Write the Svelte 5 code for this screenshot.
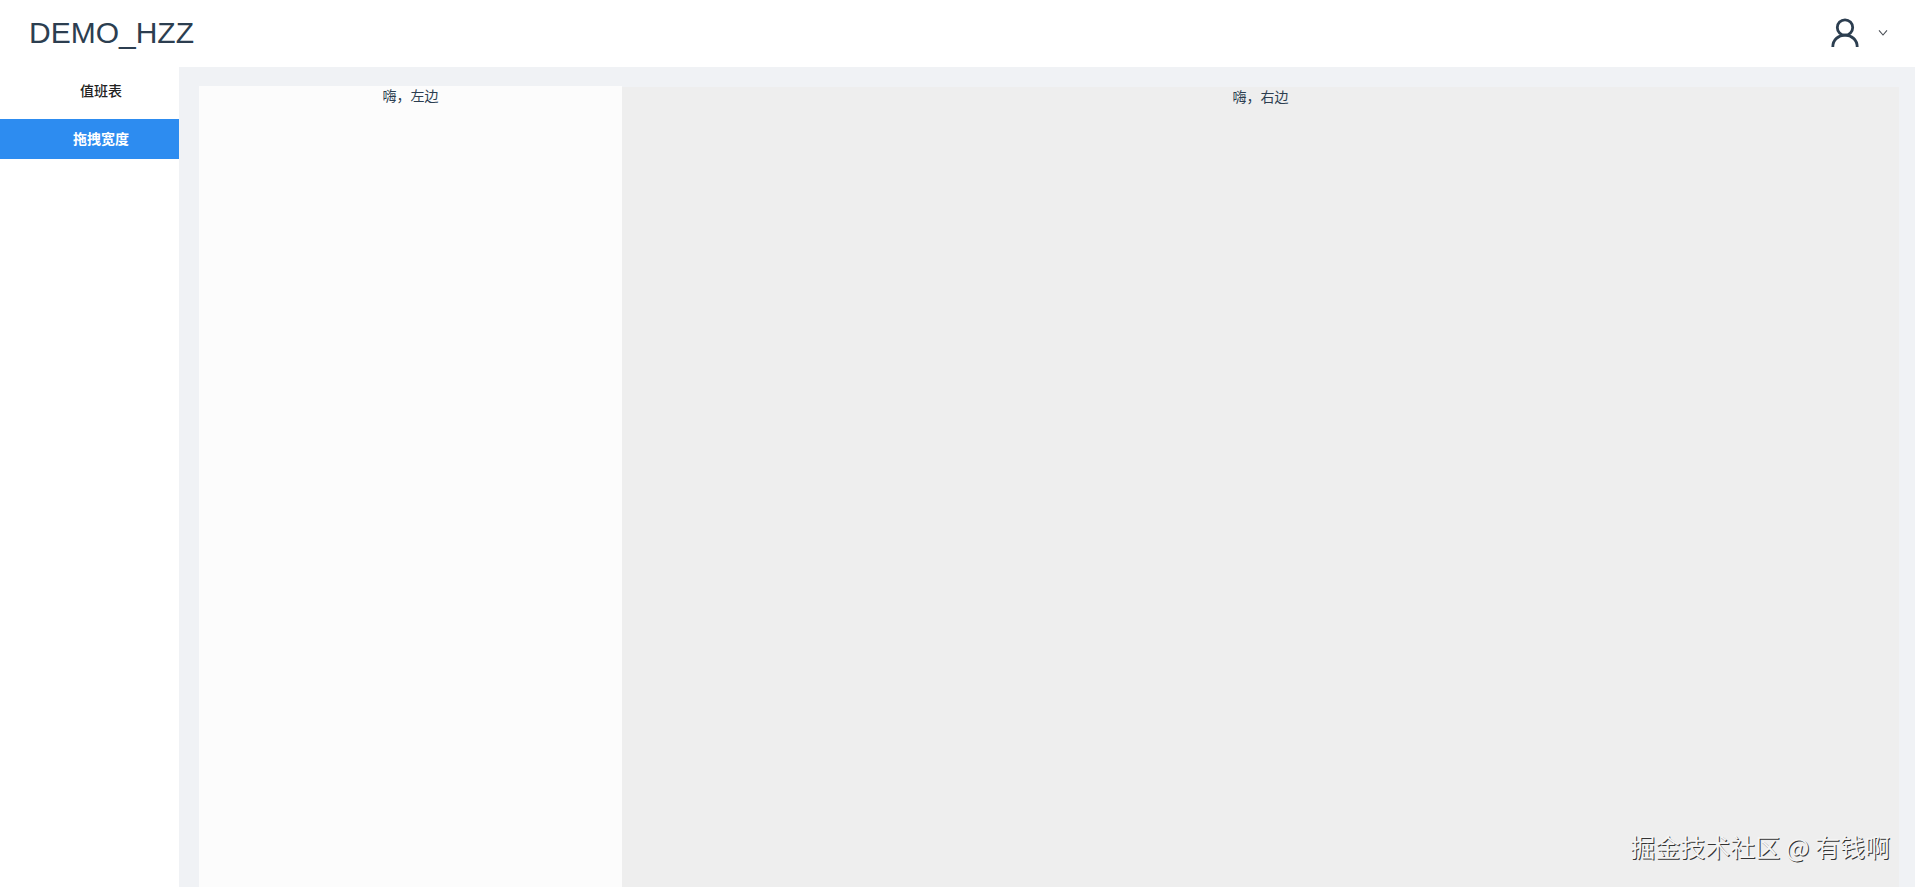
<script>
  const items = ['值班表', '拖拽宽度'];
  let active = $state('拖拽宽度');
</script>

<div class="page">
  <header>
    <h1>DEMO_HZZ</h1>
    <button class="account" aria-label="账户">
      <svg width="28" height="30" viewBox="0 0 28 30" fill="none" stroke="#2c3e50" stroke-width="2.8">
        <circle cx="14" cy="9.5" r="7.7" />
        <path d="M1.8 29C1.8 21.8 7.4 17.2 14 17.2S26.2 21.8 26.2 29" />
      </svg>
      <svg width="10" height="8" viewBox="0 0 10 8" fill="none" stroke="#4a4f56" stroke-width="1.1">
        <path d="M1 1.3L5 6L9 1.3" />
      </svg>
    </button>
  </header>
  <div class="body">
    <nav>
      {#each items as item}
        <button class:active={active === item} onclick={() => (active = item)}>{item}</button>
      {/each}
    </nav>
    <main>
      <section class="left">嗨，左边</section>
      <section class="right">嗨，右边</section>
    </main>
  </div>
  <div class="mark">掘金技术社区 @ 有钱啊</div>
</div>

<style>
  :global(body) {
    margin: 0;
  }
  .page {
    position: relative;
    display: flex;
    flex-direction: column;
    min-height: 100vh;
    background: #fff;
    color: #2c3e50;
    font: 14px/20px "Liberation Sans", "Noto Sans CJK SC", sans-serif;
  }
  header {
    box-sizing: border-box;
    display: flex;
    align-items: center;
    justify-content: space-between;
    height: 67px;
    padding: 0 27px 2px 29px;
  }
  h1 {
    margin: 0;
    font-size: 30px;
    line-height: 40px;
    font-weight: 400;
  }
  button {
    border: 0;
    background: none;
    font: inherit;
    cursor: pointer;
  }
  .account {
    display: flex;
    align-items: center;
    gap: 19px;
    padding: 0;
  }
  .body {
    display: flex;
    flex: 1;
  }
  nav {
    display: flex;
    flex-direction: column;
    gap: 8px;
    width: 179px;
    padding-top: 4px;
  }
  nav button {
    height: 40px;
    padding: 0 0 0 23px;
    color: #222;
    font-weight: 500;
    text-align: center;
  }
  nav button.active {
    background: #2d8cf0;
    color: #fff;
    font-weight: 700;
  }
  main {
    display: flex;
    flex: 1;
    padding: 19px 16px 0 20px;
    background: #f0f2f5;
    text-align: center;
  }
  .left {
    width: 423px;
    background: #fcfcfc;
  }
  .right {
    flex: 1;
    margin-top: 1px;
    background: #eee;
  }
  .mark {
    position: absolute;
    right: 25px;
    bottom: 23px;
    color: #f4f4f4;
    font-family: "Noto Sans CJK SC", sans-serif;
    font-size: 25px;
    line-height: 36px;
    text-shadow: 1px 1px 0 #333;
  }
</style>
